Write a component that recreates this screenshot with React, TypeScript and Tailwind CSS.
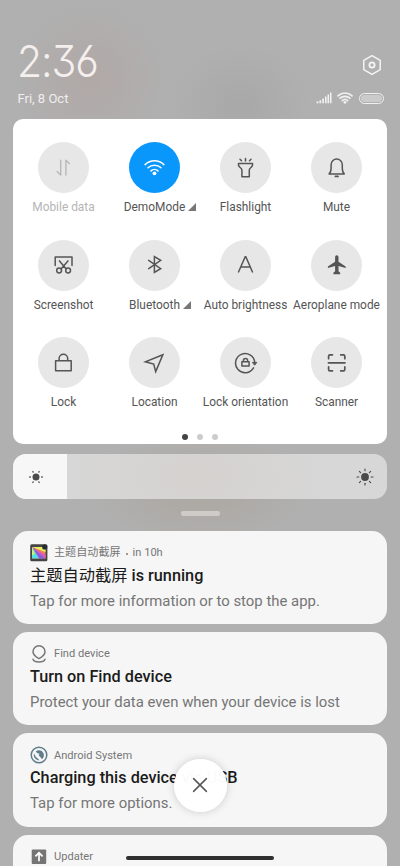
import type { ReactNode } from "react";

const stroke = {
  fill: "none",
  stroke: "currentColor",
  strokeWidth: 1.5,
  strokeLinecap: "round",
  strokeLinejoin: "round",
} as const;

function Icon({ children }: { children: ReactNode }) {
  return (
    <svg width="24" height="24" viewBox="0.5 0.5 24 24" {...stroke}>
      {children}
    </svg>
  );
}

function WifiWaves() {
  return (
    <>
      <path d="M2.6 9.1a13.6 13.6 0 0 1 18.8 0M5.5 12.3a9.4 9.4 0 0 1 13 0M8.5 15.4a5.1 5.1 0 0 1 7 0" />
      <circle cx="12" cy="17.8" r="1.9" fill="currentColor" stroke="none" />
    </>
  );
}

const tiles: {
  label: string;
  icon: ReactNode;
  active?: boolean;
  disabled?: boolean;
  more?: boolean;
}[] = [
  {
    label: "Mobile data",
    disabled: true,
    icon: (
      <Icon>
        <path strokeWidth={1.3} d="M9.2 4.6v15L5.6 16M14.4 19.6v-15l3.4 3.4" />
      </Icon>
    ),
  },
  {
    label: "DemoMode",
    active: true,
    more: true,
    icon: (
      <Icon>
        <WifiWaves />
      </Icon>
    ),
  },
  {
    label: "Flashlight",
    icon: (
      <Icon>
        <path d="M5 7.9h14v1.9c0 1.6-3.2 2.8-3.2 4.6v6.9H8.4v-6.9c0-1.8-3.4-3-3.4-4.6zM12 5.5V3M8 5.3 6.5 3.8M16 5.3l1.5-1.5" />
      </Icon>
    ),
  },
  {
    label: "Mute",
    icon: (
      <Icon>
        <path d="M4.6 18.4c1.8-1.4 2-3.3 2-5.6V9.2a5.6 5.6 0 0 1 11.2 0v3.6c0 2.3.2 4.2 2 5.6z" />
        <path strokeWidth={1.9} d="M11 20.9h2.4" />
      </Icon>
    ),
  },
  {
    label: "Screenshot",
    icon: (
      <Icon>
        <path d="M3.7 13V4.4h16.8V13M8 8.4l6.5 7.8M16.4 8.4l-6.6 7.8" />
        <circle cx="7.6" cy="18" r="2.4" />
        <circle cx="16.6" cy="18" r="2.4" />
      </Icon>
    ),
  },
  {
    label: "Bluetooth",
    more: true,
    icon: (
      <Icon>
        <path strokeLinejoin="miter" d="m6.2 7.9 12 8.2-6.3 3.9V4l6.3 3.9-12 8.2" />
      </Icon>
    ),
  },
  {
    label: "Auto brightness",
    icon: (
      <Icon>
        <path strokeLinejoin="miter" strokeLinecap="butt" d="M4.8 20 11.7 4.3h.6L19.2 20M7.2 14.6h9.6" />
      </Icon>
    ),
  },
  {
    label: "Aeroplane mode",
    icon: (
      <Icon>
        <path
          stroke="none"
          fill="currentColor"
          d="M12.3 2.7c1 0 1.7.9 1.7 2v4.6l7.2 4.6v1.7l-7.2-2v5.2l1.7 1.5v1.5H8.9v-1.5l1.7-1.5v-5.2l-7.2 2v-1.7l7.2-4.6V4.7c0-1.1.7-2 1.7-2z"
        />
      </Icon>
    ),
  },
  {
    label: "Lock",
    icon: (
      <Icon>
        <path d="M4.1 10.2h15.6v10H4.1zM7.6 10V8a4.3 4.3 0 0 1 8.6 0v2" />
      </Icon>
    ),
  },
  {
    label: "Location",
    icon: (
      <Icon>
        <path strokeLinejoin="miter" d="M20.3 4.3 2.9 11.3l8.3 2.2 2 7.6z" />
      </Icon>
    ),
  },
  {
    label: "Lock orientation",
    icon: (
      <Icon>
        <path d="M20 17.4a9.6 9.6 0 1 1 1.2-5.6" />
        <path d="M19.3 11.9h4l-2 2.5z" fill="currentColor" strokeWidth={1} />
        <path d="M8.4 11.2h7.2v4.2H8.4zM9.9 11V10a2.1 2.1 0 0 1 4.2 0v1" />
      </Icon>
    ),
  },
  {
    label: "Scanner",
    icon: (
      <Icon>
        <path
          strokeWidth={1.7}
          d="M4.1 8.2V5.7c0-.9.5-1.4 1.4-1.4H8M16.2 4.3h2.7c.9 0 1.4.5 1.4 1.4v2.5M20.3 16.4v2.5c0 .9-.5 1.4-1.4 1.4h-2.7M8 20.3H5.5c-.9 0-1.4-.5-1.4-1.4v-2.5M3.9 12.3h16.6"
        />
      </Icon>
    ),
  },
];

function GalleryIcon() {
  return (
    <svg width="18" height="18" viewBox="0 0 18 18">
      <rect x=".2" y=".3" width="17.2" height="17" rx="1.5" fill="#444" />
      <path d="M2 3h13.5v11.5H2z" fill="#f08a4c" />
      <path d="M2 3h13.5v5z" fill="#e7f060" />
      <path d="m2 3 13.5 7.5v4z" fill="#e558b8" />
      <path d="m2 3 13.5 11.5H9z" fill="#8a5be8" />
      <path d="m2 3 7 11.5H2z" fill="#52dfe6" />
      <path d="m2 3 3 7-3 1.5z" fill="#c4f37b" />
      <circle cx="14.7" cy="3" r="2.6" fill="#262b33" />
    </svg>
  );
}

function FindIcon() {
  return (
    <svg width="18" height="18" viewBox="0 0 18 18" fill="none" stroke="#777" strokeWidth="1.5">
      <path d="M9 13.6C6 12 3 10 3 6.8a6 6 0 0 1 12 0c0 3.2-3 5.2-6 6.8z" strokeLinejoin="round" />
      <path d="M3 14.2c1.3 3.6 10.7 3.6 12 0" strokeLinecap="round" />
    </svg>
  );
}

function SystemIcon() {
  return (
    <svg width="18" height="18" viewBox="0 0 18 18">
      <circle cx="9" cy="9" r="7.8" fill="none" stroke="#607d8b" strokeWidth="1.5" />
      <path
        d="M5.7 5.4C8.6 3 12.4 4.3 13.6 7.4c.6 1.7.2 3.7-.9 5L9.6 9.3a1.5 1.5 0 0 0-1.9-1.9z"
        fill="#607d8b"
      />
      <path d="M3.9 7.4c-.8 3.6 1.7 6.7 5.6 6.9L7 11.8a3.3 3.3 0 0 1-1.8-2.4z" fill="#607d8b" />
      <path d="m9.2 8.5 3.3 4.1" stroke="#607d8b" strokeWidth="1.6" />
    </svg>
  );
}

function UpdaterIcon() {
  return (
    <svg width="18" height="18" viewBox="0 0 18 18">
      <rect x="1.7" y="1.5" width="14.5" height="14.5" rx="1" fill="#757575" />
      <path d="M9 13.2V5M5.4 8.4 9 4.8l3.6 3.6" fill="none" stroke="#fff" strokeWidth="1.7" />
    </svg>
  );
}

const notifications = [
  {
    app: "主题自动截屏",
    time: "in 10h",
    title: (
      <>
        <span className="font-normal">主题自动截屏</span> is running
      </>
    ),
    text: "Tap for more information or to stop the app.",
    icon: <GalleryIcon />,
  },
  {
    app: "Find device",
    title: "Turn on Find device",
    text: "Protect your data even when your device is lost",
    icon: <FindIcon />,
  },
  {
    app: "Android System",
    title: "Charging this device via USB",
    text: "Tap for more options.",
    icon: <SystemIcon />,
  },
  {
    app: "Updater",
    icon: <UpdaterIcon />,
  },
];

function StatusIcons() {
  return (
    <div className="flex items-center text-[#f1f1f1]">
      <svg width="16" height="12" viewBox="0 0 16 12" fill="currentColor">
        <path d="M.5 9.6h2v1.6h-2zM3.5 8.2h1.7v3H3.5zM6.3 6.4H8v4.8H6.3zM9 4.5h1.6v6.7H9zM11.5 2.6h1.6v8.6h-1.6zM14 .4h1.5v10.8H14z" />
      </svg>
      <svg width="18" height="18" viewBox="0 0 24 24" {...stroke} strokeWidth={2.3} className="ml-1">
        <WifiWaves />
      </svg>
      <div className="ml-[5px] h-[11px] w-[25px] rounded-full border border-[#f1f1f1] p-px">
        <div className="h-full rounded-full bg-[#cbcbcb]" />
      </div>
    </div>
  );
}

function Header() {
  return (
    <header className="flex h-[119px] flex-col justify-end px-[17px] pb-[11px]">
      <div className="flex items-center justify-between">
        <div className="mt-[7px] h-[50px] origin-left scale-x-[0.93] text-[44px] leading-[50px] font-light tracking-[-1.2px] text-[#f5efed] [font-family:Inter,sans-serif] [font-feature-settings:'cv03','cv09']">
          2:36
        </div>
        <svg width="22" height="22" viewBox="0 0 22 22" {...stroke} className="mt-[14px] text-[#f5f5f5]">
          <path d="m11 1.7 8.2 4.7v9.2L11 20.3l-8.2-4.7V6.4z" />
          <circle cx="11" cy="11" r="2.6" strokeWidth={1.8} />
        </svg>
      </div>
      <div className="mt-[2px] flex h-5 items-center justify-between">
        <span className="ml-[0.5px] pt-px text-[13px] text-[#f1eeed]">Fri, 8 Oct</span>
        <div className="-mr-[0.5px]">
          <StatusIcons />
        </div>
      </div>
    </header>
  );
}

function Sun({ large }: { large?: boolean }) {
  const rays = large ? 8 : 6;
  return (
    <svg width="20" height="20" viewBox="-10 -10 20 20" stroke="#4a4a4a" strokeLinecap="round">
      <circle r={large ? 3.9 : 3.5} fill="#4a4a4a" stroke="none" />
      {Array.from({ length: rays }, (_, i) => (
        <path
          key={i}
          d={large ? "M6.2 0h1.8" : "M5.7 0h.6"}
          strokeWidth={large ? 1.1 : 1.3}
          transform={`rotate(${(i * 360) / rays})`}
        />
      ))}
    </svg>
  );
}

export default function App() {
  return (
    <div className="relative h-[866px] w-[400px] overflow-hidden bg-[#b0b0b0] bg-[radial-gradient(ellipse_75px_75px_at_90px_78px,#b0a8a6,transparent),radial-gradient(ellipse_70px_60px_at_240px_105px,#a9a8a8,transparent),radial-gradient(ellipse_110px_55px_at_200px_490px,#aca7a0,transparent)] [font-family:Roboto,'Noto_Sans_CJK_SC',sans-serif]">
      <Header />

      <section className="mx-[13px] h-[325px] rounded-[10px] bg-white px-[5px] pt-[23px]">
        <div className="grid grid-cols-4">
          {tiles.map((tile) => (
            <div
              key={tile.label}
              className={`flex h-[97.7px] flex-col items-center ${tile.disabled ? "text-[#b5b5b5]" : "text-[#555]"}`}
            >
              <div
                className={`flex size-[51px] items-center justify-center rounded-full ${
                  tile.active ? "bg-[#0a97fc] text-white" : "bg-[#e7e7e7]"
                }`}
              >
                {tile.icon}
              </div>
              <div className="mt-[5px] flex items-center text-[11.9px] leading-[18px] whitespace-nowrap">
                {tile.label}
                {tile.more && (
                  <svg width="8" height="8" viewBox="0 0 8 8" className="-mr-[11px] ml-[3px]">
                    <path d="M8 0v8H0z" fill="#777" />
                  </svg>
                )}
              </div>
            </div>
          ))}
        </div>
        <div className="-mt-px flex justify-center gap-[9px]">
          <div className="size-[6px] rounded-full bg-[#444]" />
          <div className="size-[6px] rounded-full bg-[#ccc]" />
          <div className="size-[6px] rounded-full bg-[#ccc]" />
        </div>
      </section>

      <div className="mx-[13px] mt-[10px] flex h-[45px] overflow-hidden rounded-[13px] bg-[#d7d7d7]">
        <div className="flex w-[54px] items-center bg-[#f7f7f7] pl-[12.5px]">
          <Sun />
        </div>
        <div className="flex flex-1 items-center justify-end bg-[radial-gradient(ellipse_130px_70px_at_130px_50%,#d5d2cf,transparent)] pr-[12.5px]">
          <Sun large />
        </div>
      </div>

      <div className="mx-auto mt-[12px] h-[5px] w-[39px] rounded-[2px] bg-[#cfcbc7]" />

      <main className="mt-[15px] flex flex-col gap-2 px-[13px]">
        {notifications.map((item) => (
          <article key={item.app} className="h-[93.2px] shrink-0 rounded-[15px] bg-[#f6f6f6] px-[17px] pt-[13px]">
            <div className="flex h-[18px] items-center text-[11.1px] text-[#777]">
              <div className="mr-[6px] flex w-[18px]">{item.icon}</div>
              <span className="pt-px whitespace-nowrap">{item.app}</span>
              {item.time && (
                <>
                  <span className="mx-[5px] mt-px size-[2px] rounded-full bg-[#777]" />
                  <span className="pt-px">{item.time}</span>
                </>
              )}
            </div>
            <h2 className="mt-[2px] text-[16.25px] leading-6 font-medium whitespace-nowrap text-[#1b1b1b]">
              {item.title}
            </h2>
            <p className="mt-[0.5px] text-[14.9px] leading-6 whitespace-nowrap text-[#757575]">{item.text}</p>
          </article>
        ))}
      </main>

      <button className="absolute top-[758.5px] left-[173.5px] flex size-[53px] items-center justify-center rounded-full bg-white/98 text-[#555] shadow-[0_0_8px_rgba(0,0,0,0.18)]">
        <svg width="16" height="16" viewBox="0 0 16 16" {...stroke}>
          <path d="m1.6 1.6 12.8 12.8M14.4 1.6 1.6 14.4" />
        </svg>
      </button>
      <div className="absolute top-[856px] left-[126px] h-[4px] w-[148px] rounded-full bg-[#2f2f2f]" />
    </div>
  );
}
